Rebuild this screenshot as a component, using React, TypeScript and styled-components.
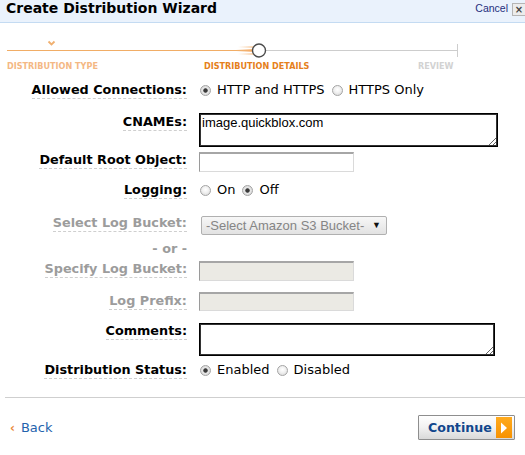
import React from 'react';
import styled, { createGlobalStyle } from 'styled-components';

const GlobalStyle = createGlobalStyle`
      html, body {
            margin: 0;
            padding: 0;
            background: #fff;
      }
      body {
            font-family: "DejaVu Sans", Verdana, sans-serif;
            width: 525px;
            height: 455px;
            overflow: hidden;
      }
`;

const Page = styled.div`
      width: 525px;
      display: flex;
      flex-direction: column;
`;

const Header = styled.header`
      height: 22px;
      display: flex;
      justify-content: space-between;
      align-items: flex-start;
      background: #eaf2fc;
      border-bottom: 1px solid #c4dbf2;
      padding-left: 6px;
`;

const Title = styled.h1`
      margin: 0;
      font: bold 14px/16px "DejaVu Sans", Verdana, sans-serif;
      color: #000;
`;

const HeaderActions = styled.div`
      display: flex;
      align-items: flex-start;
      gap: 4px;
      padding-top: 3px;
`;

const CancelLink = styled.a`
      font: 10.5px/11px "Liberation Sans", Arial, sans-serif;
      color: #1e2f7c;
      text-decoration: none;
      cursor: pointer;
`;

const CloseBox = styled.span`
      width: 12px;
      height: 11px;
      border: 1px solid #b5b5b5;
      border-right: none;
      background: #ececec;
      color: #444;
      font: bold 10px/11px "DejaVu Sans", sans-serif;
      text-align: center;
`;

const Progress = styled.div`
      height: 59px;
      display: flex;
      flex-direction: column;
`;

const Track = styled.svg`
      display: block;
`;

const StepLabels = styled.div`
      display: grid;
      grid-template-columns: 197px 214px auto;
      padding-left: 7px;
      margin-top: 1px;
`;

const StepLabel = styled.span<{ $state: 'done' | 'current' | 'todo' }>`
      font: bold 9px/12px "DejaVu Sans Condensed", "Liberation Sans Narrow", "DejaVu Sans", sans-serif;
      font-stretch: condensed;
      color: ${(p) => (p.$state === 'done' ? '#f4b884' : p.$state === 'current' ? '#e5801b' : '#d2d2d2')};
`;

const Form = styled.div`
      display: flex;
      flex-direction: column;
`;

const Row = styled.div<{ $h: number }>`
      display: grid;
      grid-template-columns: 187px 1fr;
      column-gap: 12px;
      align-items: start;
      height: ${(p) => p.$h}px;
`;

const Label = styled.label<{ $muted?: boolean; $top?: number; $plain?: boolean }>`
      justify-self: end;
      margin-top: ${(p) => p.$top || 0}px;
      font: bold 12.8px/16px "DejaVu Sans", Verdana, sans-serif;
      color: ${(p) => (p.$muted ? '#9c9c9c' : '#000')};
      border-bottom: ${(p) => (p.$plain ? 'none' : '1px dashed #cfcfcf')};
      white-space: nowrap;
`;

const Options = styled.div`
      display: flex;
      align-items: center;
      height: 16px;
      font: 13px/16px "DejaVu Sans", Verdana, sans-serif;
      color: #000;
`;

const Option = styled.label`
      display: flex;
      align-items: center;
      margin-right: 6px;
`;

const Radio = styled.input.attrs({ type: 'radio' })`
      appearance: none;
      width: 11px;
      height: 11px;
      margin: 0 6px 0 1px;
      border: 1px solid #a4a4a4;
      border-radius: 50%;
      background: radial-gradient(circle at 50% 40%, #ffffff 0, #f2f2f2 40%, #d4d4d4 100%);
      &:checked {
            background: radial-gradient(circle, #3a3a3a 0, #3a3a3a 1.8px, #e8e8e8 2.6px, #d0d0d0 100%);
      }
`;

const TextArea = styled.textarea<{ $w: number; $h: number }>`
      box-sizing: border-box;
      width: ${(p) => p.$w}px;
      height: ${(p) => p.$h}px;
      margin: 0;
      padding: 1px 2px;
      border: 1px solid #000;
      outline: 1px solid #333;
      outline-offset: -2px;
      font: 13px/15px "Liberation Sans", Arial, sans-serif;
      color: #000;
      resize: both;
`;

const TextInput = styled.input<{ $off?: boolean; $h?: number }>`
      box-sizing: border-box;
      width: 155px;
      height: ${(p) => p.$h || 20}px;
      margin: 0;
      padding: 0 3px;
      border: 1px solid #dadada;
      border-top: 2px solid #a6a6a6;
      border-left: 1px solid #9a9a9a;
      background: ${(p) => (p.$off ? '#ebeae4' : '#fff')};
      font: 13px "Liberation Sans", Arial, sans-serif;
`;

const SelectBox = styled.div`
      box-sizing: border-box;
      width: 186px;
      height: 19px;
      margin: 1px 0 0 2px;
      padding: 0 5px 0 4px;
      display: flex;
      align-items: center;
      justify-content: space-between;
      border: 1px solid #b0b0b0;
      border-radius: 2px;
      background: linear-gradient(#f7f7f7, #e2e2e2);
      font: 13px/17px "Liberation Sans", Arial, sans-serif;
      color: #858585;
`;

const Caret = styled.span`
      font-size: 9px;
      color: #111;
`;

const Separator = styled.hr`
      margin: 0 0 0 5px;
      border: none;
      border-top: 1px solid #cfcfcf;
      height: 0;
`;

const Footer = styled.div`
      display: flex;
      justify-content: space-between;
      align-items: center;
      padding: 17px 10px 0 10px;
`;

const BackLink = styled.a`
      display: flex;
      align-items: center;
      gap: 6px;
      font: 13px/16px "DejaVu Sans", Verdana, sans-serif;
      color: #2463ad;
      cursor: pointer;
`;

const BackArrow = styled.span`
      color: #ea8a3a;
      font-size: 12px;
      font-weight: bold;
`;

const ContinueButton = styled.button`
      box-sizing: border-box;
      width: 97px;
      height: 25px;
      display: flex;
      align-items: center;
      justify-content: space-between;
      padding: 0 2px 0 9px;
      border: 1px solid #8e8e8e;
      border-radius: 1px;
      background: linear-gradient(#ffffff, #f1f1f1 50%, #d9d9d9);
      font: bold 12.6px/16px "DejaVu Sans", Verdana, sans-serif;
      color: #11468c;
      cursor: pointer;
`;

const ArrowTile = styled.span`
      width: 16px;
      height: 21px;
      display: flex;
      align-items: center;
      justify-content: center;
      background: linear-gradient(#ffab1f, #f79200);
`;

function ProgressTrack() {
      return (
            <Track width={525} height={36} viewBox="0 0 525 36">
                  <defs>
                        <linearGradient id="glow" x1="0" x2="1" y1="0" y2="0">
                              <stop offset="0" stopColor="#f6c08a" stopOpacity="0" />
                              <stop offset="1" stopColor="#f4a860" stopOpacity="0.9" />
                        </linearGradient>
                  </defs>
                  <line x1={7} y1={27.5} x2={252} y2={27.5} stroke="#f1ad66" strokeWidth={1} />
                  <line x1={265} y1={27.5} x2={457} y2={27.5} stroke="#cdcdcd" strokeWidth={1} />
                  <line x1={457.5} y1={21} x2={457.5} y2={34} stroke="#cdcdcd" strokeWidth={1} />
                  <rect x={238} y={23} width={16} height={2} fill="url(#glow)" opacity={0.6} />
                  <rect x={236} y={26} width={18} height={3} fill="url(#glow)" />
                  <rect x={238} y={30} width={16} height={2} fill="url(#glow)" opacity={0.6} />
                  <circle cx={259} cy={27.5} r={6.5} fill="#fff" stroke="#4c4c4c" strokeWidth={1.4} />
                  <path d="M48.5 18.5 L51.5 21.5 L54.5 18.5" fill="none" stroke="#f0b070" strokeWidth={1.8} />
            </Track>
      );
}

export default function App() {
      return (
            <Page>
                  <GlobalStyle />
                  <Header>
                        <Title>Create Distribution Wizard</Title>
                        <HeaderActions>
                              <CancelLink>Cancel</CancelLink>
                              <CloseBox>×</CloseBox>
                        </HeaderActions>
                  </Header>

                  <Progress>
                        <ProgressTrack />
                        <StepLabels>
                              <StepLabel $state="done">DISTRIBUTION TYPE</StepLabel>
                              <StepLabel $state="current">DISTRIBUTION DETAILS</StepLabel>
                              <StepLabel $state="todo">REVIEW</StepLabel>
                        </StepLabels>
                  </Progress>

                  <Form>
                        <Row $h={31}>
                              <Label>Allowed Connections:</Label>
                              <Options>
                                    <Option>
                                          <Radio name="conn" defaultChecked />
                                          HTTP and HTTPS
                                    </Option>
                                    <Option>
                                          <Radio name="conn" />
                                          HTTPS Only
                                    </Option>
                              </Options>
                        </Row>
                        <Row $h={39}>
                              <Label $top={1}>CNAMEs:</Label>
                              <TextArea $w={299} $h={34} defaultValue="image.quickblox.com" />
                        </Row>
                        <Row $h={30}>
                              <Label>Default Root Object:</Label>
                              <TextInput />
                        </Row>
                        <Row $h={33}>
                              <Label>Logging:</Label>
                              <Options>
                                    <Option>
                                          <Radio name="log" />
                                          On
                                    </Option>
                                    <Option>
                                          <Radio name="log" defaultChecked />
                                          Off
                                    </Option>
                              </Options>
                        </Row>
                        <Row $h={26}>
                              <Label $muted>Select Log Bucket:</Label>
                              <SelectBox>
                                    -Select Amazon S3 Bucket-
                                    <Caret>▼</Caret>
                              </SelectBox>
                        </Row>
                        <Row $h={20}>
                              <Label $muted $plain>- or -</Label>
                        </Row>
                        <Row $h={31}>
                              <Label $muted>Specify Log Bucket:</Label>
                              <TextInput $off disabled />
                        </Row>
                        <Row $h={31}>
                              <Label $muted $top={1}>Log Prefix:</Label>
                              <TextInput $off $h={19} disabled />
                        </Row>
                        <Row $h={39}>
                              <Label>Comments:</Label>
                              <TextArea $w={296} $h={33} />
                        </Row>
                        <Row $h={35}>
                              <Label>Distribution Status:</Label>
                              <Options>
                                    <Option>
                                          <Radio name="status" defaultChecked />
                                          Enabled
                                    </Option>
                                    <Option>
                                          <Radio name="status" />
                                          Disabled
                                    </Option>
                              </Options>
                        </Row>
                  </Form>

                  <Separator />

                  <Footer>
                        <BackLink>
                              <BackArrow>‹</BackArrow>
                              Back
                        </BackLink>
                        <ContinueButton>
                              Continue
                              <ArrowTile>
                                    <svg width="8" height="12" viewBox="0 0 8 12">
                                          <path d="M1 0.5 L7 6 L1 11.5 Z" fill="#fff" />
                                    </svg>
                              </ArrowTile>
                        </ContinueButton>
                  </Footer>
            </Page>
      );
}
